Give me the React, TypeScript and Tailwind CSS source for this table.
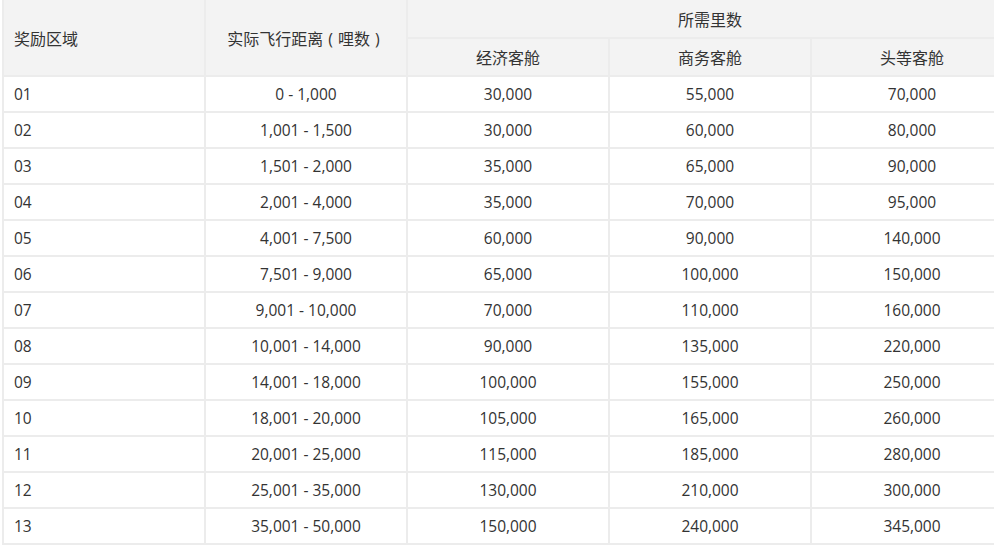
const rows: [string, string, string, string, string][] = [
  ['01', '0 - 1,000', '30,000', '55,000', '70,000'],
  ['02', '1,001 - 1,500', '30,000', '60,000', '80,000'],
  ['03', '1,501 - 2,000', '35,000', '65,000', '90,000'],
  ['04', '2,001 - 4,000', '35,000', '70,000', '95,000'],
  ['05', '4,001 - 7,500', '60,000', '90,000', '140,000'],
  ['06', '7,501 - 9,000', '65,000', '100,000', '150,000'],
  ['07', '9,001 - 10,000', '70,000', '110,000', '160,000'],
  ['08', '10,001 - 14,000', '90,000', '135,000', '220,000'],
  ['09', '14,001 - 18,000', '100,000', '155,000', '250,000'],
  ['10', '18,001 - 20,000', '105,000', '165,000', '260,000'],
  ['11', '20,001 - 25,000', '115,000', '185,000', '280,000'],
  ['12', '25,001 - 35,000', '130,000', '210,000', '300,000'],
  ['13', '35,001 - 50,000', '150,000', '240,000', '345,000'],
];

export default function App() {
  return (
    <div
      className="w-[994px] h-[545px] overflow-hidden bg-white text-[#333] text-[15.5px]"
      style={{ fontFamily: '"Open Sans", "Noto Sans CJK SC", sans-serif' }}
    >
      <table className="ml-[2px] w-[1012px] border-collapse table-fixed">
        <colgroup>
          <col className="w-[202px]" />
          <col className="w-[202px]" />
          <col className="w-[202px]" />
          <col className="w-[202px]" />
          <col className="w-[202px]" />
        </colgroup>
        <thead className="bg-[#f3f3f3] text-[16px]">
          <tr className="h-[38px]">
            <th rowSpan={2} className="border-2 border-t-0 border-[#ececec] text-left font-normal pl-[10px] pt-[2px]">
              奖励区域
            </th>
            <th rowSpan={2} className="border-2 border-t-0 border-[#ececec] font-normal pt-[2px]">
              实际飞行距离<span className="mx-[5px]">(</span>哩数<span className="mx-[5px]">)</span>
            </th>
            <th colSpan={3} className="border-2 border-t-0 border-[#ececec] font-normal pt-[2px]">
              所需里数
            </th>
          </tr>
          <tr className="h-[38px]">
            <th className="border-2 border-[#ececec] font-normal pt-[2px]">经济客舱</th>
            <th className="border-2 border-[#ececec] font-normal pt-[2px]">商务客舱</th>
            <th className="border-2 border-[#ececec] font-normal pt-[2px]">头等客舱</th>
          </tr>
        </thead>
        <tbody>
          {rows.map((r) => (
            <tr key={r[0]} className="h-[36px]">
              <td className="border-2 border-[#ececec] pl-[10px] pt-[2px] text-left">{r[0]}</td>
              <td className="border-2 border-[#ececec] pt-[2px] text-center">{r[1]}</td>
              <td className="border-2 border-[#ececec] pt-[2px] text-center">{r[2]}</td>
              <td className="border-2 border-[#ececec] pt-[2px] text-center">{r[3]}</td>
              <td className="border-2 border-[#ececec] pt-[2px] text-center">{r[4]}</td>
            </tr>
          ))}
        </tbody>
      </table>
    </div>
  );
}
